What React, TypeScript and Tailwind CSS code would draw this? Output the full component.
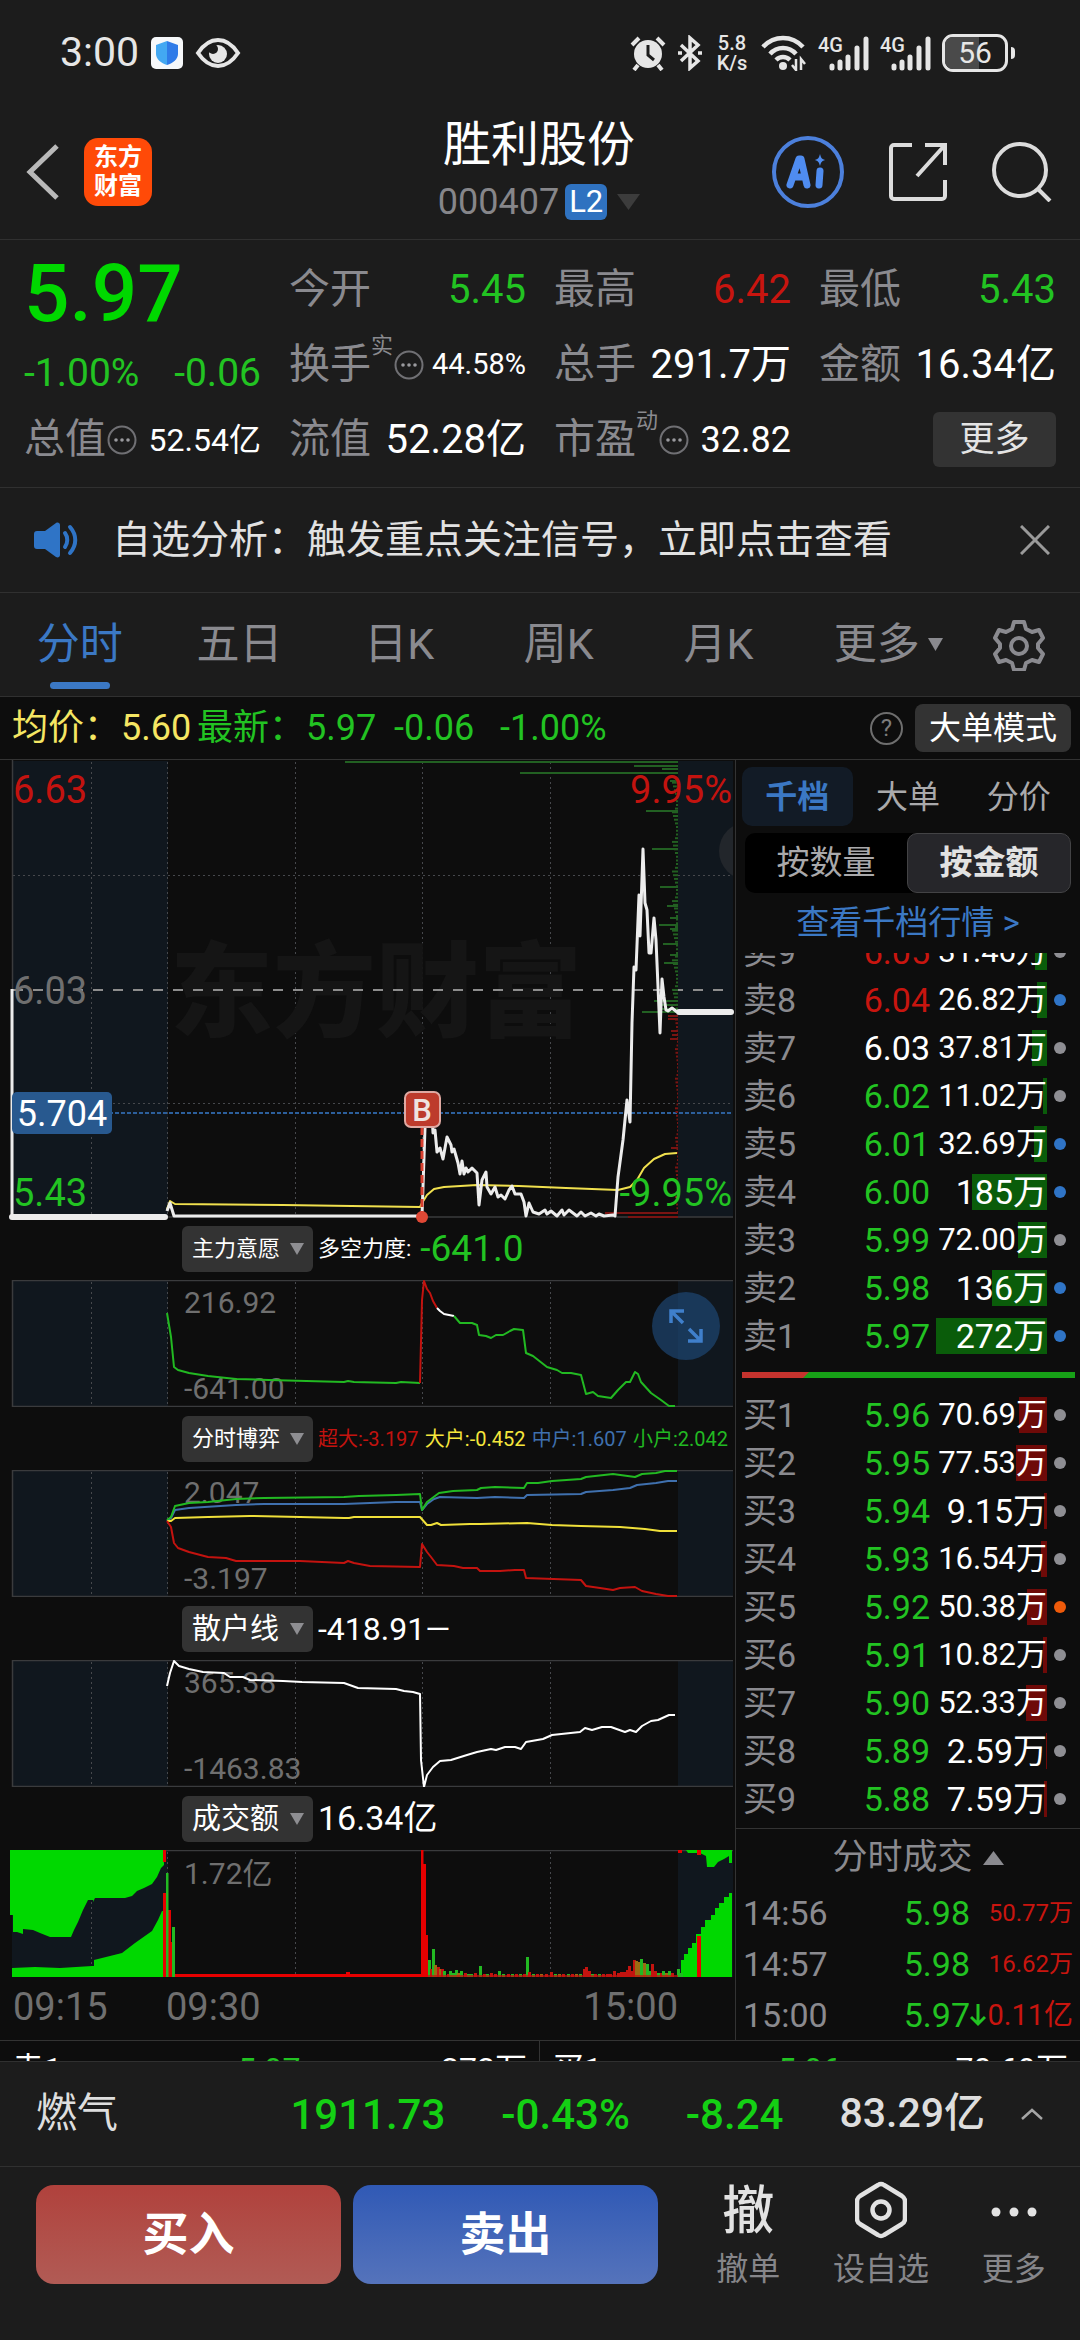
import { useState, type ReactNode } from "react";

const dotted = { stroke: "#46484c", strokeWidth: 1, strokeDasharray: "2 3" };
const GREEN = "#22b922";
const RED = "#c3130f";

type Level = {
  name: string;
  price: string;
  volume: string;
  bar: number;
  dot: "gray" | "blue" | "orange";
  tone?: "red" | "flat";
};

const asks: Level[] = [
  { name: "卖9", price: "6.05", volume: "31.46万", bar: 12, dot: "gray", tone: "red" },
  { name: "卖8", price: "6.04", volume: "26.82万", bar: 10, dot: "blue", tone: "red" },
  { name: "卖7", price: "6.03", volume: "37.81万", bar: 15, dot: "gray", tone: "flat" },
  { name: "卖6", price: "6.02", volume: "11.02万", bar: 4, dot: "gray" },
  { name: "卖5", price: "6.01", volume: "32.69万", bar: 13, dot: "blue" },
  { name: "卖4", price: "6.00", volume: "185万", bar: 75, dot: "blue" },
  { name: "卖3", price: "5.99", volume: "72.00万", bar: 29, dot: "gray" },
  { name: "卖2", price: "5.98", volume: "136万", bar: 55, dot: "blue" },
  { name: "卖1", price: "5.97", volume: "272万", bar: 111, dot: "blue" },
];

const bids: Level[] = [
  { name: "买1", price: "5.96", volume: "70.69万", bar: 28, dot: "gray" },
  { name: "买2", price: "5.95", volume: "77.53万", bar: 31, dot: "gray" },
  { name: "买3", price: "5.94", volume: "9.15万", bar: 3, dot: "gray" },
  { name: "买4", price: "5.93", volume: "16.54万", bar: 6, dot: "gray" },
  { name: "买5", price: "5.92", volume: "50.38万", bar: 20, dot: "orange" },
  { name: "买6", price: "5.91", volume: "10.82万", bar: 4, dot: "gray" },
  { name: "买7", price: "5.90", volume: "52.33万", bar: 21, dot: "gray" },
  { name: "买8", price: "5.89", volume: "2.59万", bar: 1, dot: "gray" },
  { name: "买9", price: "5.88", volume: "7.59万", bar: 3, dot: "gray" },
];

const trades = [
  { time: "14:56", price: "5.98", amount: "50.77万", size: "text-[24px]", down: false },
  { time: "14:57", price: "5.98", amount: "16.62万", size: "text-[24px]", down: false },
  { time: "15:00", price: "5.97", amount: "0.11亿", size: "text-[29px]", down: true },
];

const pricePoints =
  "167,451 170,443 174,456 422,456 425,368 427,340 431,336 433,373 435,370 437,392 440,388 443,399 447,377 451,385 452,392 454,389 458,403 460,414 462,401 464,414 466,408 468,412 472,408 477,413 479,445 482,420 486,412 487,427 491,434 495,427 498,437 501,435 505,439 509,430 512,426 515,434 521,434 524,442 526,456 529,443 533,452 539,454 545,450 547,454 551,451 557,456 562,450 564,455 569,450 573,453 577,456 581,452 585,456 591,453 596,456 599,454 604,456 613,455 615,456 618,417 623,380 627,340 630,362 632,263 634,207 636,210 639,135 640,176 643,89 645,143 647,150 649,193 651,193 654,158 656,180 660,273 662,219 664,237 666,250 668,251 672,248 677,252";

const avgPoints =
  "167,449 170,441 175,444 283,445 420,447 422,443 427,435 434,429 444,427 477,425 519,426 566,428 618,430 630,427 637,420 644,408 654,399 665,394 677,393";

// [y, left x] of the long rows in the volume-by-price profile
const profileGreen = [
  [2, 345], [6, 634], [9, 662], [13, 520], [21, 670], [51, 646], [89, 652], [127, 660],
  [146, 667], [158, 670], [165, 659], [169, 670], [184, 663], [195, 670], [203, 664],
  [241, 654], [245, 662], [249, 659], [252, 642],
];
const profileRed = [
  [256, 668], [259, 668], [271, 671], [275, 672], [279, 670], [388, 671], [453, 605], [457, 628],
];

// [x, height, colour] of the one-minute turnover bars
const volumeBars: [number, number, string][] = [
  [428, 17, GREEN], [430, 8, RED], [432, 28, GREEN], [434, 12, "#9a6b12"], [437, 10, RED],
  [439, 8, "#9a6b12"], [441, 8, RED], [443, 6, GREEN], [447, 3, RED], [449, 6, GREEN], [452, 4, GREEN],
  [455, 7, GREEN], [457, 4, "#9a6b12"], [460, 6, GREEN], [464, 4, RED], [467, 3, GREEN],
  [470, 3, GREEN], [474, 4, RED], [479, 11, GREEN], [483, 3, RED], [486, 3, GREEN], [490, 4, RED],
  [494, 3, RED], [498, 6, GREEN], [502, 3, GREEN], [507, 3, RED], [511, 3, GREEN], [515, 3, RED],
  [519, 3, GREEN], [523, 3, RED], [526, 20, GREEN], [528, 5, RED], [532, 3, GREEN], [536, 3, RED],
  [540, 3, "#9a6b12"], [545, 3, RED], [550, 5, RED], [554, 3, GREEN], [558, 3, "#9a6b12"],
  [562, 3, RED], [567, 3, GREEN], [571, 3, RED], [575, 3, "#9a6b12"], [579, 3, GREEN], [583, 8, RED],
  [585, 10, RED], [588, 6, RED], [591, 3, GREEN], [594, 3, RED], [598, 3, GREEN], [602, 3, RED],
  [606, 3, RED], [609, 3, RED], [613, 6, RED], [617, 4, RED], [620, 5, RED], [623, 5, RED],
  [626, 7, RED], [628, 11, RED], [631, 6, RED], [633, 17, RED], [635, 16, "#9a6b12"],
  [638, 15, "#9a6b12"], [640, 18, GREEN], [643, 14, "#9a6b12"], [646, 13, GREEN], [649, 6, GREEN],
  [651, 13, RED], [654, 6, RED], [657, 4, GREEN], [660, 4, RED], [662, 6, GREEN], [665, 4, "#9a6b12"],
  [668, 6, GREEN], [671, 4, RED], [677, 8, GREEN], [680, 4, GREEN],
];

function Triangle({ className }: { className: string }) {
  return (
    <svg viewBox="0 0 14 12" preserveAspectRatio="none" className={className} fill="currentColor" aria-hidden="true">
      <path d="M0 0h14L7 12z" />
    </svg>
  );
}

function InfoDots() {
  return (
    <svg viewBox="0 0 30 30" className="mx-px size-[30px] shrink-0" aria-hidden="true">
      <circle cx="15" cy="15" r="13.5" fill="none" stroke="#707074" strokeWidth="2" />
      <g fill="#9a9a9e">
        <circle cx="9" cy="15" r="1.8" />
        <circle cx="15" cy="15" r="1.8" />
        <circle cx="21" cy="15" r="1.8" />
      </g>
    </svg>
  );
}

function Signal() {
  return (
    <div className="flex items-end">
      <span className="mb-4 -mr-[14px] text-[20px] leading-5 font-medium">4G</span>
      <svg viewBox="0 0 40 36" className="h-9 w-10" stroke="currentColor" strokeWidth="5" strokeLinecap="round">
        <path d="M3 31v2M11 27v6M19 22v11M28 13v20M37 4v29" />
      </svg>
    </div>
  );
}

function StatusBar() {
  return (
    <div className="flex h-[105px] items-center justify-between pr-[65px] pl-[60px] text-[#e6e6e6]">
      <div className="flex items-center gap-3">
        <span className="text-[41px] leading-none">3:00</span>
        <svg viewBox="0 0 32 32" className="size-8">
          <defs>
            <linearGradient id="shield" x1="0" x2="1" y1="0" y2="0">
              <stop offset="0.5" stopColor="#43a8f2" />
              <stop offset="0.5" stopColor="#2f7be8" />
            </linearGradient>
          </defs>
          <rect width="32" height="32" rx="5" fill="#f6f8fa" />
          <path d="M16 4l11 4v9c0 5-5 9-11 11C10 26 5 22 5 17V8z" fill="url(#shield)" />
        </svg>
        <svg viewBox="0 0 46 32" className="h-8 w-[46px]" fill="none" stroke="currentColor" strokeWidth="4">
          <path d="M3 16C9 7 15 3 23 3s14 4 20 13c-6 9-12 13-20 13S9 25 3 16z" />
          <circle cx="23" cy="17" r="9" fill="currentColor" stroke="none" />
          <circle cx="18" cy="12" r="5" fill="#1c1c1c" stroke="none" />
        </svg>
      </div>
      <div className="flex items-center gap-[11px]">
        <svg viewBox="0 0 36 36" className="size-9" aria-label="闹钟">
          <circle cx="18" cy="19" r="14" fill="currentColor" />
          <path d="M2 10l7-7M34 10l-7-7M8 30l-4 5M28 30l4 5" stroke="currentColor" strokeWidth="4" />
          <path d="M18 10v10l6 5" fill="none" stroke="#1c1c1c" strokeWidth="3" />
        </svg>
        <svg viewBox="0 0 26 36" className="h-9 w-[26px]" fill="none" stroke="currentColor" strokeWidth="3.5" aria-label="蓝牙">
          <path d="M4 10l17 16-8 7V3l8 7L4 26" />
          <path d="M1 18h4M21 18h4" />
        </svg>
        <div className="w-9 text-center text-[20px] leading-[20px] font-medium">
          <div>5.8</div>
          <div>K/s</div>
        </div>
        <svg viewBox="0 0 46 36" className="h-9 w-[46px]" fill="none" stroke="currentColor" strokeWidth="4.5" aria-label="无线网络">
          <path d="M2 12C13 0 31 0 42 12M9 19c7-8 19-8 26 0M15 25c4-4 10-4 14 0" />
          <circle cx="22" cy="31" r="4" fill="currentColor" stroke="none" />
          <path d="M35 24v11l-4-5M40 35V24l4 5" strokeWidth="2.5" />
        </svg>
        <Signal />
        <Signal />
        <div className="flex items-center gap-[3px]">
          <div className="relative flex h-[38px] w-[66px] items-center justify-center overflow-hidden rounded-[11px] border-3 border-current text-[30px] leading-none">
            <span className="absolute inset-y-0 left-0 w-[56%] bg-[#4a4a4a]" />
            <span className="relative">56</span>
          </div>
          <span className="h-3 w-1 rounded-r bg-current" />
        </div>
      </div>
    </div>
  );
}

function Header() {
  return (
    <header className="flex h-[134px] items-center justify-between pr-[28px] pl-[26px]">
      <div className="flex w-[340px] items-center gap-6">
        <button aria-label="返回">
          <svg viewBox="0 0 34 56" className="h-14 w-[34px]" fill="none" stroke="#b9b9b9" strokeWidth="5">
            <path d="M31 2L4 28l27 26" />
          </svg>
        </button>
        <div className="flex size-[68px] flex-col items-center justify-center rounded-[14px] bg-[#ff4a08] text-[24px] leading-[29px] font-bold text-white">
          <span>东方</span>
          <span>财富</span>
        </div>
      </div>
      <div className="flex flex-col items-center">
        <h1 className="text-[48px] leading-[60px] text-white">胜利股份</h1>
        <div className="flex items-center gap-[6px] text-[36px] leading-[54px] text-[#86868a]">
          <span>000407</span>
          <span className="rounded-md bg-[#2f72c0] px-[4px] text-[31px] leading-[36px] text-white">L2</span>
          <Triangle className="ml-1 h-4 w-[23px] text-[#3c3c3c]" />
        </div>
      </div>
      <div className="flex w-[340px] items-center justify-end gap-11">
        <button aria-label="AI" className="flex size-[72px] items-center justify-center rounded-full border-4 border-[#4c80dc] text-[#4f8cf0]">
          <svg viewBox="0 0 44 36" className="h-9 w-11" fill="none" stroke="currentColor" strokeWidth="7" strokeLinecap="round" strokeLinejoin="round" aria-hidden="true">
            <path d="M4 31L13 5h2l6 26M9 23h9M34 17l-1 14" />
            <path d="M34 0c1 4 2 5 5 6-3 1-4 2-5 6-1-4-2-5-5-6 3-1 4-2 5-6z" fill="currentColor" stroke="none" />
          </svg>
        </button>
        <button aria-label="分享">
          <svg viewBox="0 0 60 60" className="size-[60px]" fill="none" stroke="#dcdcdc" strokeWidth="4">
            <path d="M24 3H6a3 3 0 0 0-3 3v48a3 3 0 0 0 3 3h48a3 3 0 0 0 3-3V38M37 3h20v20M57 3L29 34" />
          </svg>
        </button>
        <button aria-label="搜索">
          <svg viewBox="0 0 60 60" className="size-[60px]" fill="none" stroke="#dcdcdc" strokeWidth="4">
            <circle cx="28" cy="28" r="26" />
            <path d="M46 47l12 12" />
          </svg>
        </button>
      </div>
    </header>
  );
}

function Stat({ label, sup, info, children, className = "text-[40px] text-white" }: {
  label: string;
  sup?: string;
  info?: boolean;
  children: ReactNode;
  className?: string;
}) {
  return (
    <div className="flex h-[75px] items-center justify-between whitespace-nowrap">
      <div className="flex items-center text-[41px] text-[#8a8a8f]">
        <span>{label}</span>
        {sup && <span className="self-start text-[22px] leading-6">{sup}</span>}
        {info && <InfoDots />}
      </div>
      <span className={className}>{children}</span>
    </div>
  );
}

function Stats() {
  return (
    <section className="grid grid-cols-4 gap-x-7 border-y border-[#303030] px-6 pt-3 pb-[10px]">
      <div className="row-span-2 flex flex-col whitespace-nowrap">
        <div className="h-[84px] text-[80px] leading-[84px] font-medium text-[#00d800]">5.97</div>
        <div className="flex h-[66px] items-center justify-between pt-2 text-[39px] text-[#22c322]">
          <span>-1.00%</span>
          <span>-0.06</span>
        </div>
      </div>
      <Stat label="今开" className="text-[40px] text-[#22c322]">5.45</Stat>
      <Stat label="最高" className="text-[40px] text-[#c8150f]">6.42</Stat>
      <Stat label="最低" className="text-[40px] text-[#22c322]">5.43</Stat>
      <Stat label="换手" sup="实" info className="text-[29px] text-white">44.58%</Stat>
      <Stat label="总手">291.7万</Stat>
      <Stat label="金额">16.34亿</Stat>
      <Stat label="总值" info className="text-[32px] text-white">52.54亿</Stat>
      <Stat label="流值">52.28亿</Stat>
      <Stat label="市盈" sup="动" info className="text-[36px] text-white">32.82</Stat>
      <div className="flex h-[75px] items-center justify-end">
        <button className="h-[55px] w-[123px] rounded-md bg-[#333] text-[35px] leading-none text-[#e4e4e4]">更多</button>
      </div>
    </section>
  );
}

function Notice() {
  return (
    <div className="flex h-[105px] items-center border-b border-[#303030] pr-[30px] pl-[34px] text-[39px] text-[#e2e2e2]">
      <svg viewBox="0 0 44 36" className="mr-[34px] h-9 w-11" fill="#2f74c6" aria-hidden="true">
        <path d="M0 12c0-2 1-3 3-3h8L22 1c2-1 4 0 4 2v30c0 2-2 3-4 2l-11-8H3c-2 0-3-1-3-3z" />
        <path d="M31 11c3 4 3 10 0 14M36 5c7 8 7 18 0 26" fill="none" stroke="#2f74c6" strokeWidth="4" strokeLinecap="round" />
      </svg>
      <p className="flex-1 whitespace-nowrap">自选分析：触发重点关注信号，立即点击查看</p>
      <button aria-label="关闭">
        <svg viewBox="0 0 30 30" className="size-[30px]" stroke="#9a9a9a" strokeWidth="3">
          <path d="M1 1l28 28M29 1L1 29" />
        </svg>
      </button>
    </div>
  );
}

const periods = ["分时", "五日", "日K", "周K", "月K", "更多"];

function PeriodTabs() {
  const [active, setActive] = useState("分时");
  return (
    <nav className="flex h-[104px] border-b border-[#303030] text-[43px] text-[#8a8a8f]">
      {periods.map((p) => (
        <button
          key={p}
          onClick={() => setActive(p)}
          className={`relative flex flex-1 items-center justify-center gap-2 ${p === active ? "text-[#3b78c4]" : ""}`}
        >
          <span className={p === "更多" ? "pl-5" : ""}>{p}</span>
          {p === "更多" && <Triangle className="h-[13px] w-[15px]" />}
          {p === active && <span className="absolute bottom-[7px] h-[7px] w-[60px] rounded-full bg-[#3b78c4]" />}
        </button>
      ))}
      <button aria-label="设置" className="flex w-[122px] items-center justify-center">
        <svg viewBox="0 0 52 52" className="size-[52px]" fill="none" stroke="currentColor" strokeWidth="4" strokeLinejoin="round">
          <path d="M21 3h10l2 7 6 3 7-2 4 8-5 6v4l5 6-4 8-7-2-6 3-2 7H21l-2-7-6-3-7 2-4-8 5-6v-4l-5-6 4-8 7 2 6-3z" />
          <circle cx="26" cy="27" r="8" />
        </svg>
      </button>
    </nav>
  );
}

function QuoteLine() {
  return (
    <div className="flex h-[63px] items-center justify-between border-b border-[#333] pr-[9px] pl-3 text-[36px] whitespace-nowrap">
      <div className="flex items-center text-[#22c322]">
        <span className="w-[109px] text-[#f5e663]">均价：</span>
        <span className="w-[76px] text-[#f5e663]">5.60</span>
        <span className="w-[109px]">最新：</span>
        <span className="w-[88px]">5.97</span>
        <span className="w-[106px]">-0.06</span>
        <span>-1.00%</span>
      </div>
      <div className="flex items-center gap-3">
        <button aria-label="帮助" className="size-[33px] rounded-full border-2 border-[#6e6e6e] text-[24px] leading-none text-[#7c7c7c]">?</button>
        <button className="h-12 w-[156px] rounded-lg bg-[#333] text-[32px] leading-none text-white">大单模式</button>
      </div>
    </div>
  );
}

function PanelBase({ boxed = true }: { boxed?: boolean }) {
  return (
    <>
      <rect x="12" y="0" width="156" height="127" fill="#10171e" />
      <rect x="678" y="0" width="55" height="127" fill="#10171e" />
      <path d="M91.5 2v125M167.5 2v125M295.5 2v125M422.5 2v125M550.5 2v125" {...dotted} />
      <path d={boxed ? "M733 .5H12.5V126.5H733" : "M733 .5H12"} fill="none" stroke="#3a3b3d" strokeWidth="1.5" />
    </>
  );
}

function Line({ points, color, width = 2 }: { points: string; color: string; width?: number }) {
  return <polyline points={points} fill="none" stroke={color} strokeWidth={width} strokeLinejoin="round" />;
}

function PanelHead({ name, size, children }: { name: string; size: string; children: ReactNode }) {
  return (
    <div className="flex h-[63px] items-center gap-[5px] pl-[182px] whitespace-nowrap text-white">
      <div className="relative">
        <select
          aria-label="指标"
          className={`h-[46px] w-[131px] appearance-none rounded-md bg-[#333] pl-[10px] leading-[46px] text-white ${size}`}
        >
          <option>{name}</option>
        </select>
        <Triangle className="pointer-events-none absolute top-[17px] right-[9px] h-3 w-[14px] text-[#8e8e92]" />
      </div>
      {children}
    </div>
  );
}

function PriceChart() {
  const ticks = Array.from({ length: 118 }, (_, i) => ({
    y: 19 + i * 3.7,
    len: [3, 2, 5, 2, 3, 6, 2, 4][(i * 5) % 8],
  }));
  return (
    <svg viewBox="0 0 735 457" className="block w-full overflow-visible">
      <rect x="12" y="1" width="156" height="456" fill="#10171e" />
      <rect x="678" y="1" width="55" height="456" fill="#10171e" />
      <path d="M91.5 2v455M167.5 2v455M295.5 2v455M422.5 2v455M550.5 2v455M13 115.5h720M13 343.5h720" {...dotted} />
      <path d="M12.5 0v457H733" fill="none" stroke="#3a3b3d" strokeWidth="1.5" />
      <clipPath id="edge">
        <rect width="733" height="457" />
      </clipPath>
      <circle cx="748" cy="91" r="29" fill="#22262b" clipPath="url(#edge)" />
      <text x="376" y="269" textAnchor="middle" className="text-[103px] font-black" fill="#151515">东方财富</text>
      <path d="M13 230h720" stroke="#8d8d8d" strokeWidth="2" strokeDasharray="10 10" />
      <path d="M13 353h720" stroke="#2c5f9c" strokeWidth="2" strokeDasharray="4 2" />

      {ticks.map((t) => (
        <path
          key={t.y}
          d={`M${678 - (t.y > 254 ? t.len / 2 : t.len)} ${t.y}H678`}
          stroke={t.y > 254 ? "#7a1412" : "#226022"}
          strokeWidth="2"
        />
      ))}
      {profileGreen.map(([y, x]) => (
        <path key={y} d={`M${x} ${y}H678`} stroke="#226022" strokeWidth="2" />
      ))}
      {profileRed.map(([y, x]) => (
        <path key={y} d={`M${x} ${y}H678`} stroke="#7a1412" strokeWidth="2" />
      ))}

      <Line points={avgPoints} color="#f0e04e" />
      <Line points={pricePoints} color="#ececec" width={3} />
      <path d="M12 229v228" stroke="#ececec" strokeWidth="3" />
      <path d="M12 457h153M679 252h52" stroke="#ececec" strokeWidth="6" strokeLinecap="round" />

      <path d="M422 367v88" stroke="#d8402f" strokeWidth="3" strokeDasharray="8 4" />
      <circle cx="422" cy="457" r="6" fill="#e04835" />
      <rect x="405" y="332" width="35" height="35" rx="6" fill="#bd3b2c" stroke="#dfa9a2" strokeWidth="2" />
      <text x="422" y="361" textAnchor="middle" className="text-[31px] font-medium" fill="#efe3e0">B</text>

      <g className="text-[38px]">
        <text x="13" y="43" fill={RED}>6.63</text>
        <text x="732" y="43" textAnchor="end" fill={RED}>9.95%</text>
        <text x="13" y="244" fill="#6f6f6f">6.03</text>
        <text x="13" y="446" fill="#22c322">5.43</text>
        <text x="732" y="446" textAnchor="end" fill="#22c322">-9.95%</text>
        <rect x="12" y="332" width="100" height="42" rx="5" fill="#28598f" />
        <text x="62" y="366" textAnchor="middle" className="text-[36px]" fill="#fff">5.704</text>
      </g>
    </svg>
  );
}

function Charts() {
  return (
    <div className="min-w-0">
      <PriceChart />

      <PanelHead name="主力意愿" size="text-[22px]">
        <span className="text-[22px]">多空力度:</span>
        <span className="pl-1 text-[37px] text-[#22c322]">-641.0</span>
      </PanelHead>
      <div className="relative">
        <svg viewBox="0 0 735 127" className="block w-full">
          <PanelBase />
          <g className="text-[30px]" fill="#6f6f6f">
            <text x="184" y="33">216.92</text>
            <text x="184" y="119">-641.00</text>
          </g>
          <Line color={GREEN} points="167,33 171,57 174,87 178,90 189,93 208,96 236,99 269,100 344,102 348,101 354,102 396,103 401,102 420,103" />
          <Line color={RED} points="420,103 422,20 424,1 427,9 430,13 433,21 437,28" />
          <Line color="#fff" points="437,28 440,31 444,34 454,36" />
          <Line color={GREEN} points="454,36 460,43 472,43 477,45 479,55 486,56 491,58 496,55 503,55 510,51 514,49 523,50 526,73 533,76 547,87 557,90 562,93 571,93 581,95 586,114 593,112 598,116 611,118 618,110 626,102 630,102 635,92 638,94 641,102 651,113 661,120 669,126 675,126" />
        </svg>
        <button aria-label="放大" className="absolute top-3 right-[15px] flex size-[68px] items-center justify-center rounded-full bg-[#1f4a7a]/65">
          <svg viewBox="0 0 34 34" className="size-[34px]" fill="none" stroke="#3f7fcb" strokeWidth="3.5">
            <path d="M2 14V2h13M2 2l12 12M32 20v12H19M32 32L20 20" />
          </svg>
        </button>
      </div>

      <PanelHead name="分时博弈" size="text-[22px]">
        <div className="flex flex-1 justify-between pr-[7px] text-[20px]">
          <span className="text-[#c3130f]">超大:-3.197</span>
          <span className="text-[#f5e63c]">大户:-0.452</span>
          <span className="text-[#3f70ae]">中户:1.607</span>
          <span className="text-[#22b922]">小户:2.042</span>
        </div>
      </PanelHead>
      <svg viewBox="0 0 735 127" className="block w-full">
        <PanelBase />
        <g className="text-[30px]" fill="#6f6f6f">
          <text x="184" y="33">2.047</text>
          <text x="184" y="119">-3.197</text>
        </g>
        <Line color="#3f70ae" points="167,51 171,48 175,40 189,38 236,35 264,34 344,34 396,32 420,32 422,40 427,34 434,29 440,27 477,28 495,27 524,28 527,25 581,24 586,22 613,20 630,18 637,15 656,13 668,11 677,11" />
        <Line color={GREEN} points="167,50 171,47 175,36 189,33 208,32 236,29 264,28 344,27 359,26 396,25 420,24 422,40 427,32 439,23 453,21 477,20 481,18 495,17 524,18 527,13 538,13 552,11 581,9 586,7 613,4 635,7 642,4 656,3 665,1 677,1" />
        <Line color="#f0e03a" points="167,51 171,51 175,48 208,47 250,46 300,47 344,48 349,48 354,47 420,47 427,55 431,55 437,53 441,55 470,54 480,54 527,53 552,55 581,56 620,57 645,59 660,61 677,61" />
        <Line color={RED} points="167,51 171,57 174,73 178,78 189,82 208,87 226,88 236,91 300,91 344,93 348,91 354,93 370,96 420,97 422,74 427,82 431,87 437,95 454,96 463,98 477,98 480,101 500,101 515,100 524,100 526,108 581,110 586,116 600,118 613,120 620,118 635,117 642,121 656,124 668,126 677,126" />
      </svg>

      <PanelHead name="散户线" size="text-[29px]">
        <span className="text-[32px]">-418.91—</span>
      </PanelHead>
      <svg viewBox="0 0 735 127" className="block w-full">
        <PanelBase />
        <g className="text-[30px]" fill="#6f6f6f">
          <text x="184" y="33">365.38</text>
          <text x="184" y="119">-1463.83</text>
        </g>
        <Line color="#fff" points="167,26 170,13 174,1 179,6 189,9 203,12 224,13 230,17 243,17 250,20 283,21 302,22 344,23 358,28 396,29 404,31 413,32 420,34 421,100 424,127 427,115 433,107 440,101 451,100 467,95 477,92 491,89 496,90 505,87 515,87 521,89 526,82 543,79 552,75 580,72 585,68 592,70 602,67 611,67 625,72 630,70 636,72 642,66 651,61 658,60 669,55 675,55" />
      </svg>

      <PanelHead name="成交额" size="text-[29px]">
        <span className="text-[34px]">16.34亿</span>
      </PanelHead>
      <svg viewBox="0 0 735 127" className="block w-full">
        <PanelBase boxed={false} />
        <text x="184" y="34" className="text-[30px]" fill="#6f6f6f">1.72亿</text>
        <g fill="#00d800">
          <path d="M10 0H164V15L161 18L157 27L152 34L144 38L137 41L132 46L125 48H95L93 52V50H88L83 60L78 72L74 80L71 87H50L40 83L33 80L23 79V84L17 82H13V65H10z" />
          <path d="M12 127V118L35 117L60 118L92 116H94V110L110 106L122 103L135 93L152 81L158 70L162 61H168V127z" />
          <path d="M681 127V110H684V104H688V98H692V93H696V84H701V77H705V70H711V65H715V58H719V53H724V47H729V43H732V127z" />
          <path d="M686 0H732V13H729V6L724 9L718 12L714 17H707L706 6L700 3H688z" />
        </g>
        <g fill="#e60000">
          <path d="M163 0h3v12h-3zM163 43h3v84h-3zM168 60h3v67h-3zM171 92h2v35h-2z" />
          <path d="M175 124H421V0H423.500V14H426V85H428V127H175zM346 122h4v3h-4z" />
          <path d="M697 86h4v41h-4zM678 0h4v3h-4zM697 0h4v5h-4z" />
        </g>
        <path d="M166 23h2.500v104H166zM172 77h3v50h-3z" fill={GREEN} />
        {volumeBars.map(([x, h, color]) => (
          <rect key={x} x={x} y={127 - h} width="3" height={h} fill={color} />
        ))}
        <path d="M428 126H678" stroke={RED} strokeWidth="2" opacity="0.7" />
      </svg>

      <div className="flex h-[61px] items-center pr-[57px] pl-[13px] text-[38px] text-[#6f6f6f]">
        <span className="w-[153px]">09:15</span>
        <span className="flex-1">09:30</span>
        <span>15:00</span>
      </div>
    </div>
  );
}

const dotColor = { gray: "bg-[#8e8e93]", blue: "bg-[#2f74c6]", orange: "bg-[#ee5a0a]" };

function LevelTable({ levels, side }: { levels: Level[]; side: "ask" | "bid" }) {
  return (
    <table className="w-full table-fixed text-[34px] leading-[46px]">
      <tbody>
        {levels.map((l) => (
          <tr key={l.name} className="h-12">
            <td className="w-[100px] p-0 pl-[7px] align-middle text-[#8a8a8f]">{l.name}</td>
            <td
              className={`p-0 text-right align-middle ${
                l.tone === "red" ? "text-[#c8150f]" : l.tone === "flat" ? "text-white" : "text-[#22c322]"
              }`}
            >
              {l.price}
            </td>
            <td
              className={`relative w-[117px] p-0 text-right align-middle text-white ${
                l.volume.length > 5 ? "text-[31px]" : "text-[34px]"
              }`}
            >
              <span
                className={`absolute top-[6px] right-0 h-9 ${side === "ask" ? "bg-[#0a5c0a]" : "bg-[#6e0a08]"}`}
                style={{ width: l.bar }}
              />
              <span className="relative">{l.volume}</span>
            </td>
            <td className="w-[33px] p-0 align-middle">
              <span className={`ml-[7px] block size-3 rounded-full ${dotColor[l.dot]}`} />
            </td>
          </tr>
        ))}
      </tbody>
    </table>
  );
}

function OrderBook() {
  return (
    <aside className="min-w-0 border-l border-[#333]">
      <div className="flex px-[6px] pt-[7px] text-[32px] text-[#a9a9ab]">
        <button className="h-[59px] flex-1 rounded-[10px] bg-[#121b26] font-bold text-[#3b78c4]">千档</button>
        <button className="h-[59px] flex-1">大单</button>
        <button className="h-[59px] flex-1">分价</button>
      </div>
      <div className="mt-[7px] mr-[9px] ml-[9px] flex h-[60px] rounded-[10px] bg-black text-[33px] text-[#a9a9ab]">
        <button className="flex-1">按数量</button>
        <button className="flex-1 rounded-[10px] border border-[#434345] bg-[#26262a] font-bold text-[#e2e2e2]">按金额</button>
      </div>
      <a href="#levels" className="block h-[60px] text-center text-[33px] leading-[60px] text-[#3b78c4]">查看千档行情 &gt;</a>

      <div id="levels" className="overflow-hidden">
        <div className="-mt-[25px]">
          <LevelTable levels={asks} side="ask" />
        </div>
      </div>
      <svg viewBox="0 0 333 6" className="mx-[6px] mt-3 mb-[13px] block h-[6px]" preserveAspectRatio="none">
        <rect width="333" height="6" fill="#17a017" />
        <path d="M0 0H67L61 6H0z" fill="#c5332e" />
      </svg>
      <LevelTable levels={bids} side="bid" />

      <div className="mt-[5px] border-t border-[#333]">
        <button className="flex h-[58px] w-full items-center justify-center gap-[10px] pl-5 text-[35px] text-[#8a8a8f]">
          分时成交
          <Triangle className="h-[14px] w-[21px] rotate-180" />
        </button>
        <table className="w-full table-fixed text-[34px] leading-[48px]">
          <tbody>
            {trades.map((t) => (
              <tr key={t.time} className="h-[51px]">
                <td className="w-[120px] p-0 pl-[7px] align-middle text-[#8a8a8f]">{t.time}</td>
                <td className="p-0 text-right align-middle text-[#22c322]">{t.price}</td>
                <td className="w-4 p-0 align-middle">
                  {t.down && (
                    <svg viewBox="0 0 16 24" className="block h-6 w-4" fill="none" stroke="#22c322" strokeWidth="3" aria-label="下跌">
                      <path d="M8 1v20M1 14l7 7 7-7" />
                    </svg>
                  )}
                </td>
                <td className={`w-[94px] p-0 pr-[7px] text-right align-middle text-[#c8150f] ${t.size}`}>{t.amount}</td>
              </tr>
            ))}
          </tbody>
        </table>
      </div>
    </aside>
  );
}

function LevelOneStrip() {
  return (
    <div className="grid h-[21px] grid-cols-2 overflow-hidden border-t border-[#333] text-[32px] leading-[56px] text-white">
      <div className="flex justify-between border-r border-[#333] px-3">
        <span className="w-[226px]">卖1</span>
        <span className="flex-1 text-[#22c322]">5.97</span>
        <span>272万</span>
      </div>
      <div className="flex justify-between px-3">
        <span className="w-[226px]">买1</span>
        <span className="flex-1 text-[#22c322]">5.96</span>
        <span>70.69万</span>
      </div>
    </div>
  );
}

function IndexBar() {
  return (
    <div className="flex h-[106px] items-center gap-14 border-y border-[#303030] pr-[37px] pl-9 text-[42px] font-medium text-[#14d014]">
      <span className="flex-1 text-[41px] font-normal text-[#dedede]">燃气</span>
      <span>1911.73</span>
      <span>-0.43%</span>
      <span>-8.24</span>
      <button aria-label="展开" className="flex items-center gap-9 text-[41px] text-[#dedede]">
        83.29亿
        <svg viewBox="0 0 22 12" className="h-3 w-[22px]" fill="none" stroke="#a5a5a5" strokeWidth="2.500">
          <path d="M1 11L11 2l10 9" />
        </svg>
      </button>
    </div>
  );
}

function ActionBar() {
  return (
    <footer className="flex pt-[18px] pb-[57px] pl-9 text-[32px] text-[#86868a]">
      <div className="flex flex-[622] gap-3 text-[46px] font-bold text-white">
        <button className="h-[99px] flex-1 rounded-[18px] bg-linear-to-b from-[#b0413c] to-[#b15b55]">买入</button>
        <button className="h-[99px] flex-1 rounded-[18px] bg-linear-to-b from-[#3059b5] to-[#5573bb]">卖出</button>
      </div>
      <div className="ml-6 grid flex-[398] grid-cols-3">
        <button className="flex flex-col items-center">
          <span className="flex h-[54px] items-center text-[52px] leading-none font-medium text-[#e2e2e2]">撤</span>
          <span className="mt-2 leading-[44px]">撤单</span>
        </button>
        <button className="flex flex-col items-center">
          <svg viewBox="0 0 52 58" className="-mt-1 h-[58px] w-[52px]" fill="none" stroke="#e2e2e2" strokeWidth="4.500" strokeLinejoin="round">
            <path d="M23 4q3-2 6 0l18 11q3 2 3 5v18q0 3-3 5L29 54q-3 2-6 0L5 43q-3-2-3-5V20q0-3 3-5z" />
            <circle cx="26" cy="29" r="8.500" />
          </svg>
          <span className="mt-2 leading-[44px]">设自选</span>
        </button>
        <button className="flex flex-col items-center">
          <svg viewBox="0 0 46 54" className="h-[54px] w-[46px]" fill="#e2e2e2">
            <circle cx="5" cy="27" r="4.500" />
            <circle cx="23" cy="27" r="4.500" />
            <circle cx="41" cy="27" r="4.500" />
          </svg>
          <span className="mt-2 leading-[44px]">更多</span>
        </button>
      </div>
    </footer>
  );
}

export default function App() {
  return (
    <div className="flex min-h-screen flex-col bg-[#1c1c1c] font-[Roboto,'Noto_Sans_CJK_SC',sans-serif]">
      <StatusBar />
      <Header />
      <Stats />
      <Notice />
      <PeriodTabs />
      <main className="bg-[#0d0d0d]">
        <QuoteLine />
        <div className="grid grid-cols-[735fr_345fr]">
          <Charts />
          <OrderBook />
        </div>
        <LevelOneStrip />
      </main>
      <IndexBar />
      <ActionBar />
    </div>
  );
}
